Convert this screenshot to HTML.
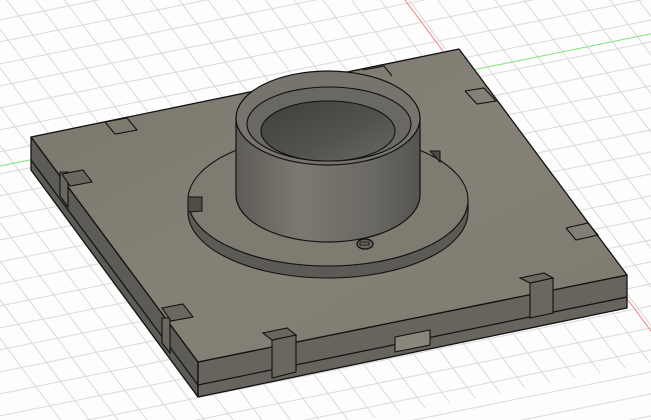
<!DOCTYPE html>
<html><head><style>html,body{margin:0;padding:0;background:#fff;overflow:hidden;width:651px;height:420px}svg{display:block}</style></head>
<body>
<svg width="651" height="420" viewBox="0 0 651 420" xmlns="http://www.w3.org/2000/svg">
<defs>
<linearGradient id="cyl" x1="0" x2="1" y1="0" y2="0">
<stop offset="0" stop-color="#5e5c56"/><stop offset="0.35" stop-color="#7b7972"/><stop offset="0.75" stop-color="#6a6862"/><stop offset="1" stop-color="#56544f"/>
</linearGradient>
<linearGradient id="hole" x1="0" x2="1" y1="0" y2="1">
<stop offset="0" stop-color="#3f3e3a"/><stop offset="0.6" stop-color="#55534e"/><stop offset="1" stop-color="#6a6862"/>
</linearGradient>
<linearGradient id="top" x1="0" x2="1" y1="0" y2="1">
<stop offset="0" stop-color="#7a766c"/><stop offset="0.5" stop-color="#858176"/><stop offset="1" stop-color="#7e7a70"/>
</linearGradient>
<clipPath id="c"><rect width="651" height="420"/></clipPath>
</defs>
<g clip-path="url(#c)">
<rect width="651" height="420" fill="#fdfdfd"/>
<g stroke="#d9d9d9" stroke-width="1">
<line x1="-400" y1="-200" x2="100" y2="473"/><line x1="-375" y1="-205" x2="125" y2="468"/><line x1="-350" y1="-210" x2="150" y2="463"/><line x1="-325" y1="-215" x2="175" y2="458"/><line x1="-300" y1="-220" x2="200" y2="453"/><line x1="-275" y1="-225" x2="225" y2="448"/><line x1="-250" y1="-230" x2="250" y2="443"/><line x1="-225" y1="-235" x2="275" y2="438"/><line x1="-200" y1="-240" x2="300" y2="433"/><line x1="-175" y1="-245" x2="325" y2="428"/><line x1="-150" y1="-250" x2="350" y2="423"/><line x1="-125" y1="-255" x2="375" y2="418"/><line x1="-100" y1="-260" x2="400" y2="413"/><line x1="-75" y1="-265" x2="425" y2="408"/><line x1="-50" y1="-270" x2="450" y2="403"/><line x1="-25" y1="-275" x2="475" y2="398"/><line x1="0" y1="-280" x2="500" y2="393"/><line x1="25" y1="-285" x2="525" y2="388"/><line x1="50" y1="-290" x2="550" y2="383"/><line x1="75" y1="-295" x2="575" y2="378"/><line x1="100" y1="-300" x2="600" y2="373"/><line x1="125" y1="-305" x2="625" y2="368"/><line x1="150" y1="-310" x2="650" y2="363"/><line x1="175" y1="-315" x2="675" y2="358"/><line x1="200" y1="-320" x2="700" y2="353"/><line x1="225" y1="-325" x2="725" y2="348"/><line x1="250" y1="-330" x2="750" y2="343"/><line x1="275" y1="-335" x2="775" y2="338"/><line x1="300" y1="-340" x2="800" y2="333"/><line x1="325" y1="-345" x2="825" y2="328"/><line x1="350" y1="-350" x2="850" y2="323"/><line x1="375" y1="-355" x2="875" y2="318"/><line x1="400" y1="-360" x2="900" y2="313"/><line x1="425" y1="-365" x2="925" y2="308"/><line x1="450" y1="-370" x2="950" y2="303"/>
<line x1="-50" y1="30" x2="700" y2="-122"/><line x1="-50" y1="52" x2="700" y2="-100"/><line x1="-50" y1="74" x2="700" y2="-78"/><line x1="-50" y1="96" x2="700" y2="-56"/><line x1="-50" y1="118" x2="700" y2="-34"/><line x1="-50" y1="140" x2="700" y2="-12"/><line x1="-50" y1="162" x2="700" y2="10"/><line x1="-50" y1="184" x2="700" y2="32"/><line x1="-50" y1="206" x2="700" y2="54"/><line x1="-50" y1="228" x2="700" y2="76"/><line x1="-50" y1="250" x2="700" y2="98"/><line x1="-50" y1="272" x2="700" y2="120"/><line x1="-50" y1="294" x2="700" y2="142"/><line x1="-50" y1="316" x2="700" y2="164"/><line x1="-50" y1="338" x2="700" y2="186"/><line x1="-50" y1="360" x2="700" y2="208"/><line x1="-50" y1="382" x2="700" y2="230"/><line x1="-50" y1="404" x2="700" y2="252"/><line x1="-50" y1="426" x2="700" y2="274"/><line x1="-50" y1="448" x2="700" y2="296"/><line x1="-50" y1="470" x2="700" y2="318"/><line x1="-50" y1="492" x2="700" y2="340"/><line x1="-50" y1="514" x2="700" y2="362"/><line x1="-50" y1="536" x2="700" y2="384"/><line x1="-50" y1="558" x2="700" y2="406"/>
</g>
<line x1="405" y1="0" x2="680" y2="370" stroke="#f08080" stroke-width="1"/>
<line x1="0" y1="166" x2="660" y2="32" stroke="#7de07d" stroke-width="1"/>

<polygon points="31,137 198,362 198,397 31,170" fill="#5d5b55" stroke="#111" stroke-width="1.3" stroke-linejoin="round"/>
<polygon points="198,362 627,275 627,308 198,397" fill="#66645d" stroke="#111" stroke-width="1.3" stroke-linejoin="round"/>
<polyline points="31,160 198,385 627,297" fill="none" stroke="#111" stroke-width="1.2"/>
<polygon points="31,137 459,49 627,275 198,362" fill="url(#top)" stroke="#111" stroke-width="1.3" stroke-linejoin="round"/>

<g fill="#6a675f" stroke="#111" stroke-width="1.1">
<polygon points="60,172 68,172 68,207 60,196"/><polygon points="62,174 83,170 92,182 70,186"/>
<polygon points="162,318 170,318 170,353 162,343"/><polygon points="162,308 183,304 193,317 171,321"/>
<polygon points="272,340 296,335 296,372 272,378"/><polygon points="263,333 287,328 296,335 272,340"/>
<polygon points="530,283 553,278 553,313 530,318"/><polygon points="520,278 544,273 553,278 530,283"/>
<polygon points="395,337 430,330 430,345 395,352" fill="#8a867b"/>
</g>
<g fill="none" stroke="#111" stroke-width="1.1">
<polyline points="105,122 127,118 137,130 115,134 105,122"/>
<polyline points="465,91 484,88 496,101 477,104 465,91"/>
<polyline points="566,228 588,223 598,235 576,240 566,228"/>
<polyline points="363,70 384,66 392,76"/>
</g>

<!-- flange -->
<path d="M188,200 A140,66 0 0 0 468,200 L468,212 A140,66 0 0 1 188,212 Z" fill="#5c5a54" stroke="#111" stroke-width="1.1"/>
<ellipse cx="328" cy="200" rx="140" ry="66" fill="#7f7b71" stroke="#111" stroke-width="1.1"/>
<polygon points="188,197 202,197 202,211 188,212" fill="#4f4d48" stroke="#111" stroke-width="1"/>
<polygon points="430,151 440,151 440,162" fill="#4f4d48" stroke="#111" stroke-width="1"/>
<ellipse cx="365" cy="244" rx="8" ry="5" fill="#6a675f" stroke="#111" stroke-width="1.3"/>
<rect x="360" y="242" width="9" height="3" fill="none" stroke="#111" stroke-width="0.8"/>

<path d="M236,118 L236,195 A92,47 0 0 0 420,195 L420,118 Z" fill="url(#cyl)" stroke="#111" stroke-width="1.2"/>
<ellipse cx="328" cy="118" rx="92" ry="47" fill="#76746c" stroke="#111" stroke-width="1.2"/>
<ellipse cx="329" cy="124" rx="82" ry="37" fill="#6a6862" stroke="#111" stroke-width="1.1"/>
<ellipse cx="328" cy="131" rx="67" ry="30" fill="url(#hole)" stroke="#111" stroke-width="1.1"/>
</g>
</svg>
</body></html>
